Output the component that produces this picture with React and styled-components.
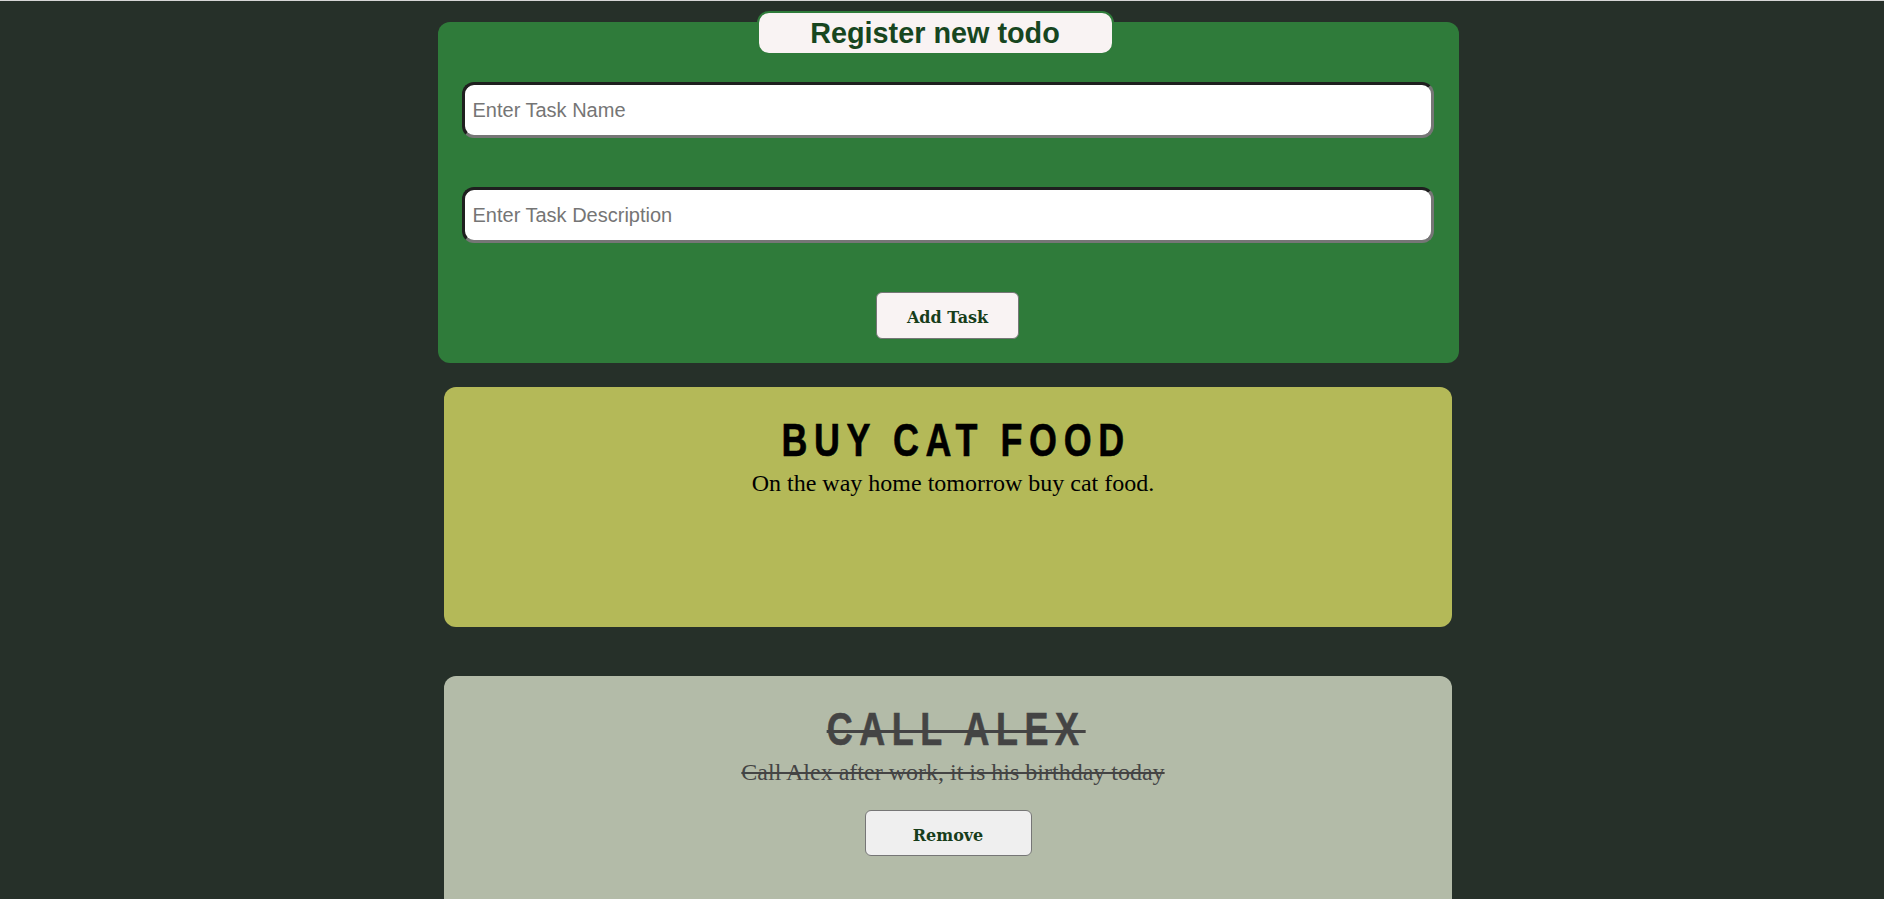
import React from 'react'
import styled, { createGlobalStyle } from "styled-components";

const GlobalStyle = createGlobalStyle`
  body {
    margin: 0;
    background: #263029;
    border-top: 1px solid #d6d6d6;
    font-family: "Liberation Serif", serif;
  }
`

const todos = [
  { id: 1, name: 'Buy cat food', description: 'On the way home tomorrow buy cat food.', done: false },
  { id: 2, name: 'Call Alex', description: 'Call Alex after work, it is his birthday today', done: true },
]

function App() {
  return (
    <>
      <GlobalStyle />
      <Page>
        {/* 등록 폼 */}
        <Form onSubmit={e => e.preventDefault()}>
          <Legend>Register new todo</Legend>
          <TaskInput placeholder="Enter Task Name" />
          <TaskInput placeholder="Enter Task Description" />
          <Button $bg="#f9f3f3" type="submit">Add Task</Button>
        </Form>

        {/* 할일 목록 */}
        {todos.map(todo => (
          <Card key={todo.id} $done={todo.done}>
            <Title $done={todo.done}>{todo.name}</Title>
            <Description $done={todo.done}>{todo.description}</Description>
            {todo.done && <Button $bg="#efefef" $wide>Remove</Button>}
          </Card>
        ))}
      </Page>
    </>
  );
}

export default App

const Page = styled.div`
  display: flex;
  flex-direction: column;
  align-items: center;
  padding: 10px 0 0 12px;
`

// 폼 css
const Form = styled.form`
  box-sizing: border-box;
  width: 1021px;
  margin-top: 11px;
  padding: 0 25px 24px 24px;
  display: flex;
  flex-direction: column;
  background: #2f7b3a;
  border-radius: 12px;
`

const Legend = styled.div`
  box-sizing: border-box;
  align-self: center;
  width: 357px;
  height: 44px;
  margin: -11px 25px 0 0;
  display: flex;
  align-items: center;
  justify-content: center;
  background: #f9f3f3;
  border: 2px solid #2f7b3a;
  border-radius: 12px;
  color: #17461f;
  font-family: "Liberation Sans", Arial, sans-serif;
  font-weight: bold;
  font-size: 28.8px;
`

const TaskInput = styled.input`
  box-sizing: border-box;
  width: 100%;
  height: 56px;
  margin-top: 27px;
  padding: 0 8px;
  border-style: solid;
  border-width: 3px;
  border-color: #1f1f1f #767676 #767676 #1f1f1f;
  border-radius: 12px;
  background: #fff;
  font-family: "Liberation Sans", Arial, sans-serif;
  font-size: 20px;
  color: #222;
  outline: none;

  & + & {
    margin-top: 49px;
  }

  &::placeholder {
    color: #757575;
  }
`

const Button = styled.button`
  box-sizing: border-box;
  align-self: center;
  width: ${p => (p.$wide ? '167px' : '143px')};
  height: ${p => (p.$wide ? '46px' : '47px')};
  margin-top: ${p => (p.$wide ? '24px' : '49px')};
  padding: 4px 0 0;
  background: ${p => p.$bg};
  border: 1px solid #767676;
  border-radius: 6px;
  color: #173d1a;
  font-family: "DejaVu Serif", serif;
  font-weight: bold;
  font-size: 16px;
  cursor: pointer;
`

// 카드 css
const Card = styled.div`
  box-sizing: border-box;
  width: 1008px;
  min-height: 240px;
  margin-top: ${p => (p.$done ? '49px' : '24px')};
  padding-top: 30px;
  display: flex;
  flex-direction: column;
  align-items: center;
  background: ${p => (p.$done ? '#b3bba8' : '#b4b958')};
  border-radius: 12px;
`

// 좁은 글꼴이 없어서 가로로 눌러서 씀
const Title = styled.h2`
  margin: 0 0 0 10px;
  line-height: 1;
  font-family: "Liberation Sans", Arial, sans-serif;
  font-weight: bold;
  font-size: 46px;
  letter-spacing: 8.5px;
  text-indent: 8px;
  transform: scaleX(0.78);
  -webkit-text-stroke: 0.6px currentColor;
  text-transform: uppercase;
  color: ${p => (p.$done ? '#444' : '#000')};
  text-decoration: ${p => (p.$done ? 'line-through' : 'none')};
  text-decoration-thickness: 3px;
`

const Description = styled.p`
  margin: 7px 0 0 10px;
  font-family: "Liberation Serif", "Times New Roman", serif;
  font-size: 24px;
  color: ${p => (p.$done ? '#444' : '#000')};
  text-decoration: ${p => (p.$done ? 'line-through' : 'none')};
`
